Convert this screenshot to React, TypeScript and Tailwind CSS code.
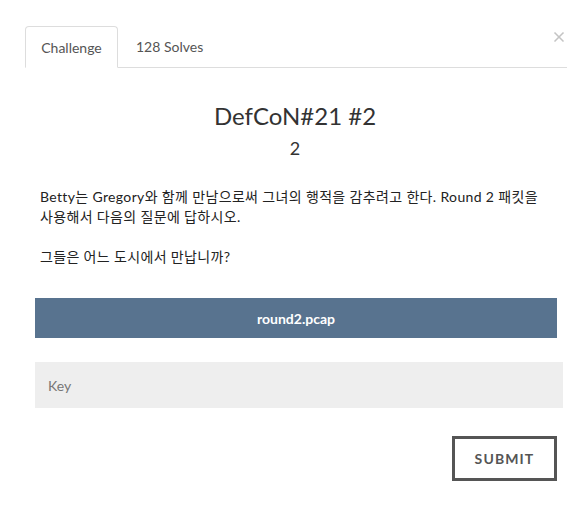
import { X } from "lucide-react";

export default function App() {
  return (
    <div className="relative h-[518px] w-[587px] overflow-hidden bg-white font-['Lato','Noto_Sans_CJK_KR',sans-serif] text-[#333]">
      <button className="absolute right-[20px] top-[29px] text-[#c4c4c4]">
        <X className="h-[16px] w-[16px]" strokeWidth={2.5} />
      </button>

      <div className="pl-[25px] pr-[20px] pt-[26px]">
        <ul className="flex border-b border-[#ddd]">
          <li className="-mb-px flex h-[42px] w-[93px] items-center justify-center rounded-t-[4px] border border-[#ddd] border-b-white bg-white text-[14px] text-[#555]">
            Challenge
          </li>
          <li className="flex h-[41px] items-center px-[18px] text-[14px] text-[#555]">
            128 Solves
          </li>
        </ul>
      </div>

      <div className="pl-[35px] pr-[24px]">
        <h1 className="mt-[34px] w-[520px] text-center text-[24px] leading-[28px] text-[#333]">DefCoN#21 #2</h1>
        <h2 className="mt-[7px] w-[520px] text-center text-[18px] leading-[22px] text-[#333]">2</h2>

        <div className="mt-[28px] break-keep pl-[5px] text-[14px] leading-[20px] tracking-[0.35px] text-[#222]">
          <p>
            Betty는 Gregory와 함께 만남으로써 그녀의 행적을 감추려고 한다. Round 2 패킷을 사용해서
            다음의 질문에 답하시오.
          </p>
          <p className="mt-[20px]">그들은 어느 도시에서 만납니까?</p>
        </div>

        <div className="mt-[31px] flex h-[40px] w-[522px] items-center justify-center bg-[#58738f] text-[14px] font-bold text-white">
          round2.pcap
        </div>

        <input
          placeholder="Key"
          className="mt-[24px] block h-[46px] w-[528px] bg-[#eeeeee] px-[13px] text-[14px] text-[#555] outline-none placeholder:text-[#777]"
        />

        <div className="mt-[28px] flex w-[522px] justify-end">
          <button className="h-[45px] w-[105px] border-[3px] border-[#555] text-[14px] font-bold tracking-[0.08em] text-[#555]">
            SUBMIT
          </button>
        </div>
      </div>
    </div>
  );
}
